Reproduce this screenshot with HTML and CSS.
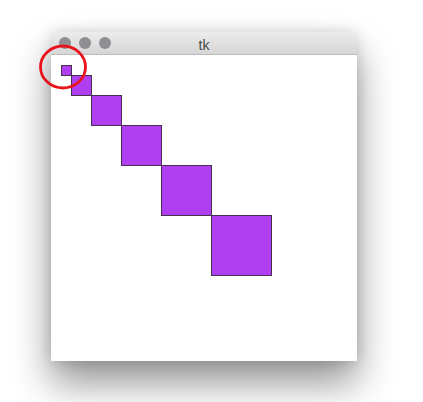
FILE: index.html
```html
<!DOCTYPE html>
<html>
<head>
<meta charset="utf-8">
<link rel="stylesheet" href="styles.css">
</head>
<body>
<div class="window">
  <div class="titlebar">
    <div class="lights"><span class="light"></span><span class="light"></span><span class="light"></span></div>
    <div class="title">tk</div>
  </div>
  <svg class="canvas" width="306" height="306" viewBox="0 0 306 306">
    <g fill="#b13ff2" stroke="#46304f" stroke-width="1">
      <rect x="10.5" y="10.5" width="10" height="10"/>
      <rect x="20.5" y="20.5" width="20" height="20"/>
      <rect x="40.5" y="40.5" width="30" height="30"/>
      <rect x="70.5" y="70.5" width="40" height="40"/>
      <rect x="110.5" y="110.5" width="50" height="50"/>
      <rect x="160.5" y="160.5" width="60" height="60"/>
    </g>
  </svg>
</div>
<svg class="mark" width="54" height="50" viewBox="0 0 54 50">
  <ellipse cx="27" cy="25" rx="22.5" ry="21" fill="none" stroke="#e8131b" stroke-width="2.8"/>
</svg>
</body>
</html>
```
FILE: styles.css
```css
html, body {
  margin: 0;
  padding: 0;
  background: #ffffff;
  width: 423px;
  height: 402px;
  overflow: hidden;
}
body {
  position: relative;
  font-family: "Liberation Sans", Arial, sans-serif;
}
.window {
  margin-left: 51px;
  margin-top: 32px;
  width: 306px;
  height: 329px;
  background: #ffffff;
  border-radius: 5px 5px 0 0;
  box-shadow: 0 22px 38px rgba(0, 0, 0, 0.42), 0 0 14px rgba(0, 0, 0, 0.14);
  display: flex;
  flex-direction: column;
}
.titlebar {
  height: 22px;
  border-radius: 5px 5px 0 0;
  background: linear-gradient(#ececec, #d6d6d6);
  border-bottom: 1px solid #bdbdbd;
  position: relative;
  display: flex;
  align-items: center;
}
.lights {
  display: flex;
  gap: 8px;
  padding-left: 8px;
}
.light {
  width: 12px;
  height: 12px;
  border-radius: 50%;
  background: #8f8e93;
}
.title {
  position: absolute;
  left: 0;
  right: 0;
  top: 0;
  line-height: 26px;
  text-align: center;
  font-size: 14px;
  color: #4a4a4a;
}
.canvas {
  display: block;
  flex: 1;
}
.mark {
  position: absolute;
  left: 36px;
  top: 42px;
}
```
